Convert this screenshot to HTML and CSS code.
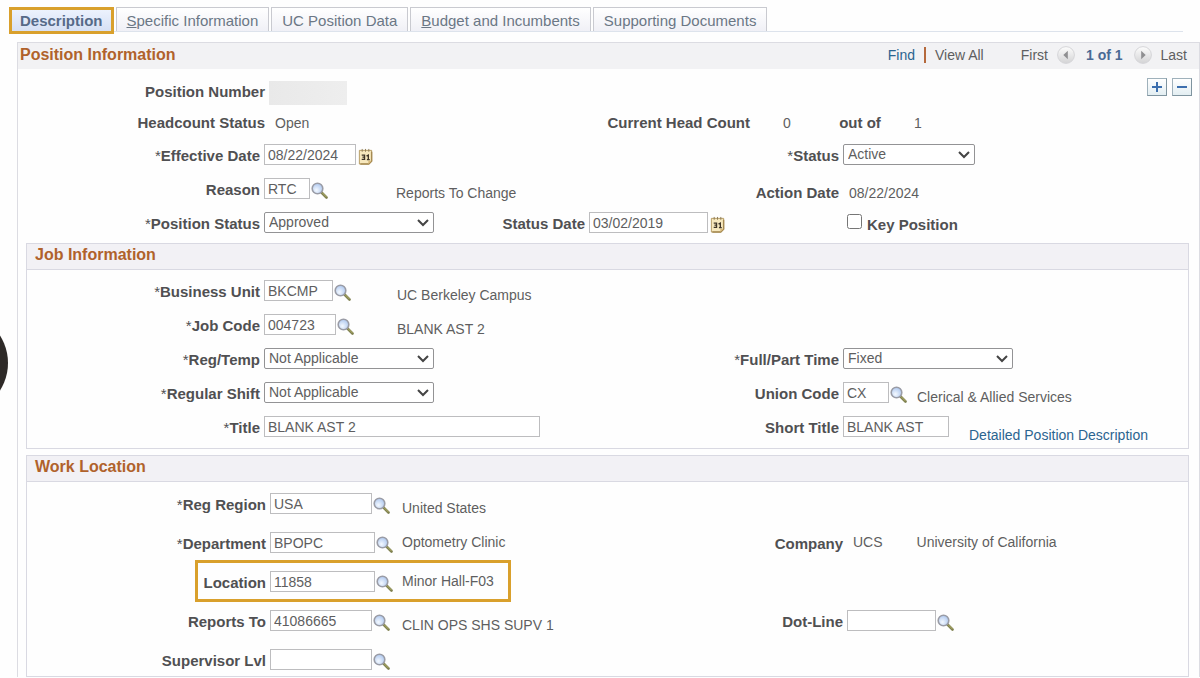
FILE: index.html
```html
<!DOCTYPE html>
<html lang="en">
<head>
    <meta charset="UTF-8">
    <meta name="viewport" content="width=device-width, initial-scale=1.0">
    <title>Position Information</title>
    <link rel="stylesheet" href="styles.css">
</head>
<body>
    <svg class="sprite" aria-hidden="true">
        <defs>
            <radialGradient id="lens" cx="0.4" cy="0.65" r="0.7">
                <stop offset="0" stop-color="#f4f9ff"/>
                <stop offset="1" stop-color="#a9c4ee"/>
            </radialGradient>
            <linearGradient id="knob" x1="0" y1="0" x2="0" y2="1">
                <stop offset="0" stop-color="#fdfdfd"/>
                <stop offset="1" stop-color="#d3d3d5"/>
            </linearGradient>
        </defs>
        <symbol id="lookup" viewBox="0 0 17 17">
            <path d="M10 10l5.500 5.500" stroke="#7f8150" stroke-width="2.600" stroke-linecap="round"/>
            <path d="M11 10.500l4.500 4.500" stroke="#b3b069" stroke-width="1"/>
            <circle cx="6.500" cy="6.500" r="5.300" fill="url(#lens)" stroke="#9a9ca6" stroke-width="1.600"/>
        </symbol>
        <symbol id="calendar" viewBox="0 0 16 18">
            <path d="M1.500 2.500h13v11l-3 3.500h-10z" fill="#f7e8bd" stroke="#b59a62"/>
            <path d="M14.500 4v10l-3 3h-9" fill="none" stroke="#a58a52" stroke-width="1.500"/>
            <path d="M11 17v-3.500h3.500z" fill="#d9bb7c"/>
            <path d="M4.500 1v3M8 1v3M11.500 1v3" stroke="#8c7a55"/>
            <path d="M4 7.500h3v4.500H4M4.800 9.700H7M9 8.500l2-1v5M9.500 12.300h3" fill="none" stroke="#3f3527" stroke-width="1.400"/>
        </symbol>
        <symbol id="prev" viewBox="0 0 18 18">
            <circle cx="9" cy="9" r="8.400" fill="url(#knob)" stroke="#d5d5d8"/>
            <path d="M10.800 4.800v8.400L6.300 9z" fill="#8f8f91"/>
        </symbol>
        <symbol id="next" viewBox="0 0 18 18">
            <circle cx="9" cy="9" r="8.400" fill="url(#knob)" stroke="#d5d5d8"/>
            <path d="M7.200 4.800v8.400L11.700 9z" fill="#8f8f91"/>
        </symbol>
    </svg>

    <div class="drawer-handle"></div>

    <nav class="tabs">
        <a class="tab active" href="#description">Description</a>
        <a class="tab" href="#specific"><u>S</u>pecific Information</a>
        <a class="tab" href="#data">UC Position Data</a>
        <a class="tab" href="#budget"><u>B</u>udget and Incumbents</a>
        <a class="tab" href="#documents">Supporting Documents</a>
    </nav>

    <main class="panel" id="description">
        <header class="panel-head">
            <h1>Position Information</h1>
            <div class="pager">
                <a href="#find">Find</a>
                <span class="bar"></span>
                <span class="view-all">View All</span>
                <span>First</span>
                <button type="button" aria-label="Previous"><svg><use href="#prev"/></svg></button>
                <strong>1 of 1</strong>
                <button type="button" aria-label="Next"><svg><use href="#next"/></svg></button>
                <span>Last</span>
            </div>
        </header>

        <div class="rows">
            <div class="row counts">
                <span class="label">Position Number</span>
                <span class="redacted"></span>
                <div class="row-tools">
                    <button type="button" aria-label="Add a row"><svg viewBox="0 0 12 12"><path d="M6 1v10M1 6h10"/></svg></button>
                    <button type="button" aria-label="Delete row"><svg viewBox="0 0 12 12"><path d="M1 6h10"/></svg></button>
                </div>
            </div>
            <div class="row counts">
                <span class="label">Headcount Status</span>
                <span class="value">Open</span>
                <span class="label">Current Head Count</span>
                <span class="count">0</span>
                <span class="label center">out of</span>
                <span class="count">1</span>
            </div>
            <div class="row">
                <label class="label" for="effdt"><i>*</i>Effective Date</label>
                <div class="field">
                    <input class="w-date" type="text" id="effdt" value="08/22/2024">
                    <button type="button" class="icon" aria-label="Choose effective date"><svg><use href="#calendar"/></svg></button>
                </div>
                <label class="label second" for="status"><i>*</i>Status</label>
                <div class="field">
                    <select class="w-status" id="status"><option>Active</option></select>
                </div>
            </div>
            <div class="row">
                <label class="label" for="reason">Reason</label>
                <div class="field">
                    <input class="w-code" type="text" id="reason" value="RTC">
                    <button type="button" class="icon" aria-label="Look up reason"><svg><use href="#lookup"/></svg></button>
                </div>
                <span class="desc low">Reports To Change</span>
                <span class="label second low">Action Date</span>
                <span class="value low">08/22/2024</span>
            </div>
            <div class="row">
                <label class="label" for="posstatus"><i>*</i>Position Status</label>
                <div class="field">
                    <select class="w-select" id="posstatus"><option>Approved</option></select>
                </div>
                <label class="label" for="statusdt">Status Date</label>
                <div class="field">
                    <input class="w-status-date" type="text" id="statusdt" value="03/02/2019">
                    <button type="button" class="icon" aria-label="Choose status date"><svg><use href="#calendar"/></svg></button>
                </div>
                <div class="field check">
                    <input type="checkbox" id="keypos">
                    <label class="label" for="keypos">Key Position</label>
                </div>
            </div>
        </div>

        <section class="group">
            <h2>Job Information</h2>
            <div class="rows">
                <div class="row">
                    <label class="label" for="bu"><i>*</i>Business Unit</label>
                    <div class="field">
                        <input class="w-unit" type="text" id="bu" value="BKCMP">
                        <button type="button" class="icon" aria-label="Look up business unit"><svg><use href="#lookup"/></svg></button>
                    </div>
                    <span class="desc low">UC Berkeley Campus</span>
                </div>
                <div class="row">
                    <label class="label" for="jobcode"><i>*</i>Job Code</label>
                    <div class="field">
                        <input class="w-job" type="text" id="jobcode" value="004723">
                        <button type="button" class="icon" aria-label="Look up job code"><svg><use href="#lookup"/></svg></button>
                    </div>
                    <span class="desc low">BLANK AST 2</span>
                </div>
                <div class="row">
                    <label class="label" for="regtemp"><i>*</i>Reg/Temp</label>
                    <div class="field">
                        <select class="w-select" id="regtemp"><option>Not Applicable</option></select>
                    </div>
                    <label class="label second" for="fullpart"><i>*</i>Full/Part Time</label>
                    <div class="field">
                        <select class="w-select" id="fullpart"><option>Fixed</option></select>
                    </div>
                </div>
                <div class="row">
                    <label class="label" for="shift"><i>*</i>Regular Shift</label>
                    <div class="field">
                        <select class="w-select" id="shift"><option>Not Applicable</option></select>
                    </div>
                    <label class="label second" for="union">Union Code</label>
                    <div class="field">
                        <input class="w-code" type="text" id="union" value="CX">
                        <button type="button" class="icon" aria-label="Look up union code"><svg><use href="#lookup"/></svg></button>
                        <span class="desc low after-icon">Clerical &amp; Allied Services</span>
                    </div>
                </div>
                <div class="row">
                    <label class="label" for="title"><i>*</i>Title</label>
                    <div class="field">
                        <input class="w-title" type="text" id="title" value="BLANK AST 2">
                    </div>
                    <label class="label second" for="shorttitle">Short Title</label>
                    <div class="field">
                        <input class="w-short" type="text" id="shorttitle" value="BLANK AST">
                        <a class="detail-link" href="#detail">Detailed Position Description</a>
                    </div>
                </div>
            </div>
        </section>

        <section class="group work">
            <h2>Work Location</h2>
            <div class="rows">
                <div class="row">
                    <label class="label" for="region"><i>*</i>Reg Region</label>
                    <div class="field">
                        <input class="w-loc" type="text" id="region" value="USA">
                        <button type="button" class="icon" aria-label="Look up region"><svg><use href="#lookup"/></svg></button>
                    </div>
                    <span class="desc low">United States</span>
                </div>
                <div class="row">
                    <label class="label" for="dept"><i>*</i>Department</label>
                    <div class="field">
                        <input class="w-loc-wide" type="text" id="dept" value="BPOPC">
                        <button type="button" class="icon" aria-label="Look up department"><svg><use href="#lookup"/></svg></button>
                    </div>
                    <span class="desc">Optometry Clinic</span>
                    <span class="label second">Company</span>
                    <div class="value pair">
                        <span>UCS</span>
                        <span>University of California</span>
                    </div>
                </div>
                <div class="row">
                    <label class="label" for="location">Location</label>
                    <div class="field highlighted">
                        <input class="w-loc-wide" type="text" id="location" value="11858">
                        <button type="button" class="icon" aria-label="Look up location"><svg><use href="#lookup"/></svg></button>
                    </div>
                    <span class="desc">Minor Hall-F03</span>
                </div>
                <div class="row">
                    <label class="label" for="reports">Reports To</label>
                    <div class="field">
                        <input class="w-loc" type="text" id="reports" value="41086665">
                        <button type="button" class="icon" aria-label="Look up reports to"><svg><use href="#lookup"/></svg></button>
                    </div>
                    <span class="desc low">CLIN OPS SHS SUPV 1</span>
                    <label class="label second" for="dotline">Dot-Line</label>
                    <div class="field">
                        <input class="w-dot" type="text" id="dotline">
                        <button type="button" class="icon" aria-label="Look up dot-line"><svg><use href="#lookup"/></svg></button>
                    </div>
                </div>
                <div class="row">
                    <label class="label" for="suplvl">Supervisor Lvl</label>
                    <div class="field">
                        <input class="w-loc" type="text" id="suplvl">
                        <button type="button" class="icon" aria-label="Look up supervisor level"><svg><use href="#lookup"/></svg></button>
                    </div>
                </div>
            </div>
        </section>
    </main>
</body>
</html>
```
FILE: styles.css
```css
*, *::after {
    box-sizing: border-box;
}

body {
    margin: 0;
    position: relative;
    overflow-x: hidden;
    font-family: "Liberation Sans", Arial, sans-serif;
    font-size: 14px;
    line-height: 22px;
    color: #5e5e60;
    background: #fefefe;
}

button, input, select {
    font: inherit;
    color: inherit;
}

button {
    display: block;
    flex: none;
    padding: 0;
    border: 0;
    background: none;
}

svg {
    display: block;
}

a {
    color: #2b6490;
    text-decoration: none;
}

.sprite {
    position: absolute;
    width: 0;
    height: 0;
}

/* round handle that peeks in from the left edge */
.drawer-handle {
    position: absolute;
    left: -94px;
    top: 312px;
    width: 102px;
    height: 102px;
    border-radius: 50%;
    background: #2e2a28;
}

/* tabs */
.tabs {
    display: flex;
    align-items: flex-start;
    gap: 2px;
    margin: 7px 17px 0 9px;
    height: 25px;
    border-bottom: 1px solid #dde3ec;
}

.tab {
    height: 24px;
    padding: 1px 10px 0;
    border: 1px solid #c9cad0;
    border-bottom: 0;
    background: linear-gradient(#fff, #f0f0f6);
    font-size: 15px;
    line-height: 24px;
    color: #6b7785;
    white-space: nowrap;
}

.tab.active {
    height: 27px;
    padding: 0 8px;
    border: 3px solid #d9a02c;
    background: linear-gradient(#ecf2fd, #d6e0f4);
    font-weight: 700;
    line-height: 21px;
    color: #566a88;
}

/* panels */
.panel {
    margin: 10px 0 0 17px;
    border: 1px solid #dcdce2;
    border-bottom: 0;
}

.panel-head {
    display: flex;
    justify-content: space-between;
    align-items: center;
    height: 26px;
    padding: 0 12px 2px 2px;
    background: #f2f2f4;
}

h1, h2 {
    margin: 0;
    font-size: 16px;
    line-height: 24px;
    color: #b0622b;
}

.pager {
    display: flex;
    align-items: center;
    gap: 9px;
}

.pager svg {
    width: 18px;
    height: 18px;
}

.pager strong {
    padding: 0 2px;
    color: #4a6a94;
}

.bar {
    width: 2px;
    height: 16px;
    background: #b5693c;
}

.view-all {
    margin-right: 28px;
}

.group {
    margin: 7px 10px 0 8px;
    border: 1px solid #d9d9e2;
}

.group h2 {
    height: 26px;
    padding-left: 8px;
    line-height: 22px;
    background: #f2f1f5;
    border-bottom: 1px solid #d9d9e2;
}

/* form rows */
.rows {
    padding-top: 12px;
}

.row {
    display: grid;
    grid-template-columns: 242fr 128fr 189fr 250fr 356fr;
    gap: 4px;
    min-height: 34px;
    align-items: start;
}

.row > * {
    min-width: 0;
}

.row.counts {
    grid-template-columns: 247fr 205fr 272fr 66fr 72fr 36fr 259fr;
    min-height: 31px;
}

.group .rows {
    padding-top: 9px;
}

.group .row {
    grid-template-columns: 233fr 129fr 188fr 250fr 345fr;
}

.row:last-child {
    min-height: 22px;
}

.group .row:last-child {
    min-height: 33px;
}

.work {
    margin-top: 6px;
}

.work .rows {
    padding-top: 10px;
}

.work .row {
    grid-template-columns: 239fr 128fr 183fr 254fr 341fr;
    min-height: 39px;
}

.work .row:last-child {
    min-height: 28px;
}

.label {
    padding-top: 2px;
    font-size: 15px;
    font-weight: 700;
    line-height: 22px;
    color: #505052;
    text-align: right;
    white-space: nowrap;
}

.counts .label {
    padding-top: 0;
}

.label i {
    font-style: normal;
    font-weight: 400;
}

.label.center, .count {
    text-align: center;
}

.second {
    grid-column: 4;
}

.value {
    padding-left: 6px;
}

.value, .desc, .detail-link {
    white-space: nowrap;
}

.low, .label.low {
    padding-top: 5px;
}

.pair {
    display: flex;
    gap: 34px;
}

.redacted {
    width: 78px;
    height: 24px;
    background: linear-gradient(90deg, #e9e9e9, #eeeeee);
}

.row-tools {
    display: flex;
    grid-column: 7;
    justify-content: flex-end;
    gap: 5px;
    padding-right: 7px;
}

.row-tools button {
    width: 20px;
    height: 18px;
    margin-top: -3px;
    padding: 2px 3px;
    border: 1px solid #9fb1bb;
    border-right-color: #7f949f;
    border-bottom-color: #7f949f;
    background: linear-gradient(#fff, #e3eef2);
}

.row-tools svg {
    width: 12px;
    height: 12px;
    fill: none;
    stroke: #3d6fae;
    stroke-width: 2;
}

.field {
    display: flex;
    align-items: flex-start;
    gap: 1px;
}

.field > * {
    flex: none;
}

.field input[type="text"], select {
    height: 21px;
    margin: 1px 0 0;
    border: 1px solid #bdbdbf;
    border-radius: 0;
    background: #fff;
}

.field input[type="text"] {
    padding: 0 0 0 3px;
}

select {
    appearance: none;
    padding: 0 20px 0 4px;
    border-color: #939395;
    border-radius: 2px;
    line-height: 19px;
}

.field select {
    background: #fff url("data:image/svg+xml,%3Csvg xmlns='http://www.w3.org/2000/svg' width='12' height='8'%3E%3Cpath d='M1 1l5 5 5-5' fill='none' stroke='%23444' stroke-width='2'/%3E%3C/svg%3E") no-repeat right 4px center;
}

.icon svg {
    width: 17px;
    height: 17px;
    margin-top: 5px;
}

.after-icon {
    padding-left: 9px;
}

.detail-link {
    padding: 9px 0 0 19px;
}

.check {
    grid-column: 5;
    padding-left: 4px;
    gap: 5px;
}

.check input {
    width: 15px;
    height: 15px;
    margin: 3px 0 0;
}

.check .label {
    padding-top: 3px;
}

/* callout round the label, field and description */
.highlighted {
    position: relative;
}

.highlighted::after {
    content: "";
    position: absolute;
    left: -75px;
    top: -10px;
    width: 316px;
    height: 42px;
    border: 3px solid #d9a02c;
    pointer-events: none;
}

/* control widths */
.w-code { width: 46px; }
.w-unit { width: 69px; }
.w-job { width: 72px; }
.w-date { width: 92px; }
.w-dot { width: 89px; }
.w-loc { width: 102px; }
.w-loc-wide { width: 105px; }
.w-short { width: 106px; }
.w-status-date { width: 119px; }
.w-status { width: 132px; }
.w-select { width: 170px; }
.w-title { width: 276px; }
```
